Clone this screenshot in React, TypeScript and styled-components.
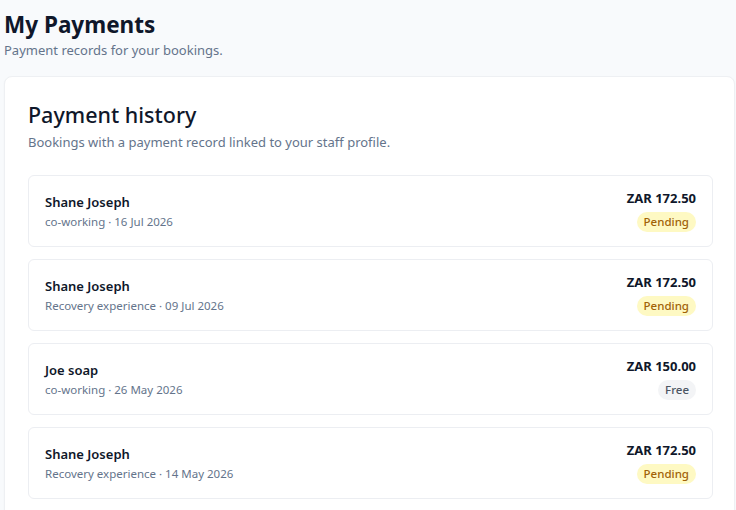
import React from "react";
import styled, { createGlobalStyle } from "styled-components";

const GlobalStyle = createGlobalStyle`
  body {
    margin: 0;
    background: #f8fafc;
    font-family: "Noto Sans", "Open Sans", Arial, sans-serif;
    color: #0f172a;
  }
`;

const Page = styled.div`
  padding: 9px 1px 0 4px;
  min-height: 100vh;
  box-sizing: border-box;
`;

const PageTitle = styled.h1`
  margin: 0;
  font-size: 22.5px;
  line-height: 32px;
  font-weight: 700;
  color: #0f172a;
`;

const PageSubtitle = styled.p`
  margin: 0;
  font-size: 13px;
  line-height: 18px;
  color: #64748b;
`;

const Card = styled.section`
  margin-top: 17px;
  background: #ffffff;
  border: 1px solid #eef0f3;
  border-radius: 8px;
  box-shadow: 0 1px 2px rgba(15, 23, 42, 0.04);
  padding: 23px 21px 24px 23px;
`;

const CardTitle = styled.h2`
  margin: 0;
  font-size: 21.5px;
  line-height: 30px;
  font-weight: 500;
  color: #0f172a;
`;

const CardDescription = styled.p`
  margin: 4px 0 0;
  font-size: 13px;
  line-height: 16px;
  color: #64748b;
`;

const List = styled.div`
  margin-top: 25px;
  display: flex;
  flex-direction: column;
  gap: 12px;
`;

const Row = styled.div`
  display: flex;
  justify-content: space-between;
  align-items: center;
  border: 1px solid #eceef2;
  border-radius: 6px;
  padding: 14px 16px;
`;

const Info = styled.div`
  display: flex;
  flex-direction: column;
  gap: 2px;
`;

const Name = styled.div`
  font-size: 13px;
  line-height: 20px;
  font-weight: 600;
  color: #0f172a;
`;

const Meta = styled.div`
  font-size: 11.5px;
  line-height: 16px;
  color: #64748b;
`;

const Side = styled.div`
  display: flex;
  flex-direction: column;
  align-items: flex-end;
  gap: 6px;
`;

const Amount = styled.div`
  font-size: 13px;
  line-height: 16px;
  font-weight: 700;
  color: #0f172a;
`;

const Badge = styled.span<{ $tone: "pending" | "free" }>`
  display: inline-flex;
  align-items: center;
  height: 20px;
  line-height: 20px;
  padding: 0 7px;
  border-radius: 999px;
  font-size: 11.5px;
  font-weight: 500;
  background: ${(p) => (p.$tone === "pending" ? "#fef9c3" : "#f3f4f6")};
  color: ${(p) => (p.$tone === "pending" ? "#a16207" : "#4b5563")};
`;

type Payment = {
  name: string;
  service: string;
  date: string;
  amount: string;
  status: "Pending" | "Free";
};

const payments: Payment[] = [
  { name: "Shane Joseph", service: "co-working", date: "16 Jul 2026", amount: "ZAR 172.50", status: "Pending" },
  { name: "Shane Joseph", service: "Recovery experience", date: "09 Jul 2026", amount: "ZAR 172.50", status: "Pending" },
  { name: "Joe soap", service: "co-working", date: "26 May 2026", amount: "ZAR 150.00", status: "Free" },
  { name: "Shane Joseph", service: "Recovery experience", date: "14 May 2026", amount: "ZAR 172.50", status: "Pending" },
];

export default function App() {
  return (
    <>
      <GlobalStyle />
      <Page>
        <PageTitle>My Payments</PageTitle>
        <PageSubtitle>Payment records for your bookings.</PageSubtitle>
        <Card>
          <CardTitle>Payment history</CardTitle>
          <CardDescription>Bookings with a payment record linked to your staff profile.</CardDescription>
          <List>
            {payments.map((p, i) => (
              <Row key={i}>
                <Info>
                  <Name>{p.name}</Name>
                  <Meta>
                    {p.service} · {p.date}
                  </Meta>
                </Info>
                <Side>
                  <Amount>{p.amount}</Amount>
                  <Badge $tone={p.status === "Pending" ? "pending" : "free"}>{p.status}</Badge>
                </Side>
              </Row>
            ))}
          </List>
        </Card>
      </Page>
    </>
  );
}
